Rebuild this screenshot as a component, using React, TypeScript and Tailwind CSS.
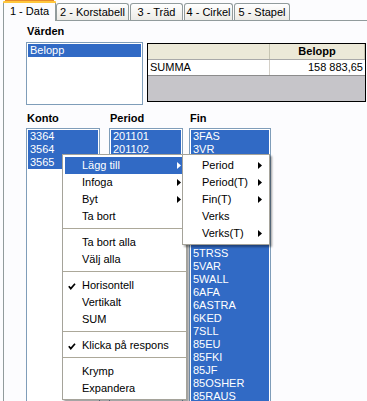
import React from "react";

const Arrow = ({ white }: { white?: boolean }) => (
  <svg width="4" height="7" viewBox="0 0 4 7" className="block">
    <polygon points="0,0 4,3.5 0,7" fill={white ? "#ffffff" : "#000000"} />
  </svg>
);

const Check = () => (
  <svg width="8" height="7" viewBox="0 0 8 7" className="block">
    <path d="M0.8 3.2 L2.8 5.6 L7 0.8" stroke="#000" strokeWidth="1.7" fill="none" />
  </svg>
);

type Item =
  | { sep: true }
  | { sep?: false; t: string; arrow?: boolean; hl?: boolean; check?: boolean };

const mainItems: Item[] = [
  { t: "Lägg till", arrow: true, hl: true },
  { t: "Infoga", arrow: true },
  { t: "Byt", arrow: true },
  { t: "Ta bort" },
  { sep: true },
  { t: "Ta bort alla" },
  { t: "Välj alla" },
  { sep: true },
  { t: "Horisontell", check: true },
  { t: "Vertikalt" },
  { t: "SUM" },
  { sep: true },
  { t: "Klicka på respons", check: true },
  { sep: true },
  { t: "Krymp" },
  { t: "Expandera" },
];

const subItems: Item[] = [
  { t: "Period", arrow: true },
  { t: "Period(T)", arrow: true },
  { t: "Fin(T)", arrow: true },
  { t: "Verks" },
  { t: "Verks(T)", arrow: true },
];

function Menu({ items, sub }: { items: Item[]; sub?: boolean }) {
  return (
    <div className="border border-[#a5a39a] bg-white p-[2px] shadow-[2px_2px_2px_rgba(0,0,0,0.38)]">
      {items.map((it, i) =>
        it.sep ? (
          <div key={i} className="h-[9px] pt-[3px] -mx-[2px]">
            <div className="h-px bg-[#aca899]" />
          </div>
        ) : (
          <div
            key={i}
            className={
              "relative h-[17px] leading-[17px] pl-[17px] whitespace-nowrap " +
              (it.hl ? "bg-[#316ac5] text-white" : "text-black")
            }
          >
            {it.check && (
              <div className="absolute left-[3px] top-[6px]">
                <Check />
              </div>
            )}
            {it.t}
            {it.arrow && (
              <div className={"absolute top-[5px] " + (sub ? "right-[5px]" : "right-[3px]")}>
                <Arrow white={it.hl} />
              </div>
            )}
          </div>
        )
      )}
    </div>
  );
}

function ListBox({
  items,
  selected,
  className,
}: {
  items: string[];
  selected: number;
  className: string;
}) {
  return (
    <div className={"border border-[#7f9db9] bg-white p-px " + className}>
      {items.map((s, i) => (
        <div
          key={i}
          className={
            "h-[13px] leading-[13px] pl-[2px] whitespace-nowrap " +
            (i < selected ? "bg-[#316ac5] text-white" : "text-black")
          }
        >
          {s}
        </div>
      ))}
    </div>
  );
}

// rows hidden under the pop-up menus are left without text
const finItems = [
  "3FAS", "3VR", "", "", "", "", "", "", "",
  "5TRSS", "5VAR", "5WALL", "6AFA", "6ASTRA", "6KED", "7SLL", "85EU",
  "85FKI", "85JF", "85OSHER", "85RAUS",
];

const periodItems = ["201101", "201102"];

export default function App() {
  return (
    <div className="relative w-[367px] h-[401px] overflow-hidden bg-[#fcfcfe] text-[11px] text-black font-['Liberation_Sans',Arial,sans-serif]">
      {/* Tab strip */}
      <div className="flex items-end h-[20px]">
        <div className="relative z-10 ml-[3px] w-[53px] h-[21px] -mb-px flex flex-col bg-[#fcfcfe]">
          <div className="h-px mx-[2px] bg-[#e68b2c]" />
          <div className="h-[2px] bg-[#ffc73c] rounded-t-[1px]" />
          <div className="flex-1 border-x border-[#919b9c] flex items-center justify-center leading-[13px] pb-[2px]">
            1 - Data
          </div>
        </div>
        <div className="w-[73px] h-[17px] border border-b-0 border-[#919b9c] rounded-t-[3px] bg-gradient-to-b from-white to-[#ecebe6] flex items-center justify-center leading-[13px]">
          2 - Korstabell
        </div>
        <div className="ml-px w-[53px] h-[17px] border border-b-0 border-[#919b9c] rounded-t-[3px] bg-gradient-to-b from-white to-[#ecebe6] flex items-center justify-center leading-[13px]">
          3 - Träd
        </div>
        <div className="ml-px w-[49px] h-[17px] border border-b-0 border-[#919b9c] rounded-t-[3px] bg-gradient-to-b from-white to-[#ecebe6] flex items-center justify-center leading-[13px]">
          4 - Cirkel
        </div>
        <div className="ml-px w-[56px] h-[17px] border border-b-0 border-[#919b9c] rounded-t-[3px] bg-gradient-to-b from-white to-[#ecebe6] flex items-center justify-center leading-[13px]">
          5 - Stapel
        </div>
      </div>

      {/* Panel */}
      <div className="ml-[3px] h-[400px] border-t border-l border-[#919b9c] pl-[22px] pt-[4px]">
        <div className="h-[13px] leading-[13px] font-bold pl-px mb-[4px]">Värden</div>
        <div className="flex items-start">
          <ListBox items={["Belopp"]} selected={1} className="w-[117px] h-[63px]" />
          <div className="ml-[4px] mt-px w-[219px] h-[59px] border border-black bg-[#c6c5c9] flex flex-col">
            <div className="flex h-[16px] bg-[#ece9d8] border-b border-[#a9a9a9]">
              <div className="w-[122px] border-r border-[#c7c5b2]" />
              <div className="flex-1 border-r border-[#c7c5b2] text-center font-bold leading-[15px]">
                Belopp
              </div>
            </div>
            <div className="flex h-[16px] bg-white border-b border-[#8c8c8c]">
              <div className="w-[122px] border-r border-[#d4d0c8] pl-[2px] leading-[15px]">SUMMA</div>
              <div className="flex-1 text-right pr-[2px] leading-[15px]">158 883,65</div>
            </div>
          </div>
        </div>

        <div className="flex mt-[7px]">
          <div className="flex flex-col w-[74px]">
            <div className="h-[13px] leading-[13px] font-bold pl-px mb-[3px]">Konto</div>
            <ListBox items={["3364", "3564", "3565"]} selected={3} className="h-[300px]" />
          </div>
          <div className="flex flex-col w-[74px] ml-[9px]">
            <div className="h-[13px] leading-[13px] font-bold pl-px mb-[3px]">Period</div>
            <ListBox items={periodItems} selected={2} className="h-[300px]" />
          </div>
          <div className="flex flex-col w-[82px] ml-[6px]">
            <div className="h-[13px] leading-[13px] font-bold pl-px mb-[3px]">Fin</div>
            <ListBox items={finItems} selected={finItems.length} className="h-[300px]" />
          </div>
        </div>
      </div>

      {/* Context menu */}
      <div className="absolute left-[62px] top-[154px] w-[125px] z-20">
        <Menu items={mainItems} />
      </div>
      <div className="absolute left-[182px] top-[154px] w-[88px] z-30">
        <Menu items={subItems} sub />
      </div>
    </div>
  );
}
